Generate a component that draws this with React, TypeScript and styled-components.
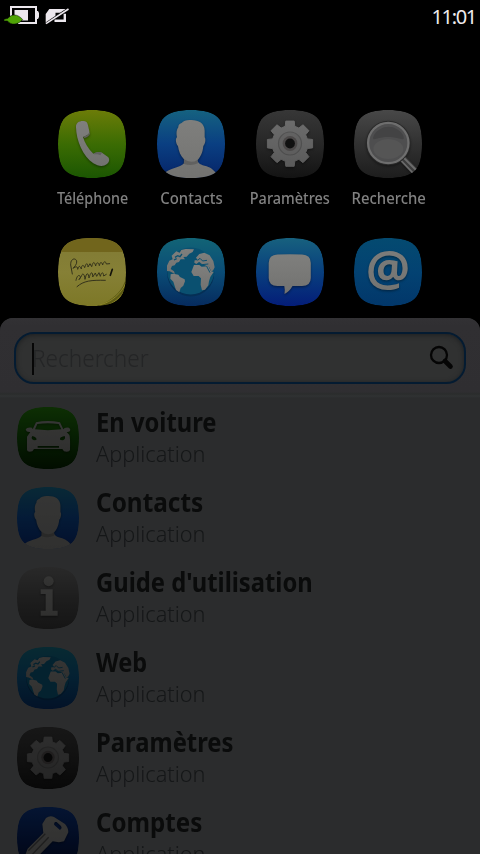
import React, { useId } from 'react';
import styled, { createGlobalStyle } from 'styled-components';

const GlobalStyle = createGlobalStyle`
  html, body { margin: 0; background: #000; }
  * { box-sizing: border-box; }
`;

const Screen = styled.main`
  width: 480px;
  height: 854px;
  overflow: hidden;
  background: #000;
  display: flex;
  flex-direction: column;
  font-family: 'Noto Sans', 'Open Sans', sans-serif;
`;

const StatusBar = styled.header`
  flex: none;
  height: 32px;
  display: flex;
  justify-content: space-between;
`;

const Clock = styled.time`
  color: #eeebed;
  font-size: 20px;
  line-height: 34px;
  letter-spacing: -1.3px;
  padding-right: 4px;
`;

const Launcher = styled.section`
  flex: none;
  height: 286px;
  padding: 78px 42px 0 43px;
  display: grid;
  grid-template-columns: repeat(4, 98.7px);
  grid-auto-rows: 128px;
  overflow: hidden;
`;

const LauncherItem = styled.div`
  display: flex;
  flex-direction: column;
  align-items: center;
`;

const LauncherLabel = styled.span<{ $stretch: number }>`
  margin-top: 8px;
  line-height: 24px;
  font-size: 15.5px;
  font-weight: 500;
  color: #818181;
  white-space: nowrap;
  transform: scaleX(${(p) => p.$stretch});
`;

const Panel = styled.section`
  flex: 1;
  min-height: 0;
  display: flex;
  flex-direction: column;
  overflow: hidden;
  background: #2b2c2d;
  border-radius: 13px 13px 0 0;
`;

const SearchHeader = styled.div`
  flex: none;
  height: 80px;
  padding: 14px;
  background: linear-gradient(#323134 0, #302f32 8px, #2f2e31 74px, #2a2c2c 76px, #303233 78px, #2b2c2d 80px);
`;

const SearchField = styled.div`
  height: 52px;
  padding: 0 9px 0 16px;
  border: 2px solid #041b31;
  border-radius: 20px;
  background: #303131;
  box-shadow: inset 0 1px 5px #1d1f20;
  display: flex;
  align-items: center;
`;

const Caret = styled.span`
  width: 2px;
  height: 32px;
  background: #060606;
  margin-top: 1px;
`;

const Placeholder = styled.span<{ $stretch: number }>`
  flex: 1;
  margin-left: -2px;
  font-size: 24px;
  font-weight: 300;
  line-height: 32px;
  color: #242526;
  transform: scaleX(${(p) => p.$stretch});
  transform-origin: left;
`;

const ResultList = styled.ul`
  list-style: none;
  margin: 0;
  padding: 0;
`;

const ResultRow = styled.li`
  height: 80px;
  padding: 9px 0 0 17px;
  display: flex;
  gap: 17px;
`;

const ResultText = styled.div`
  display: flex;
  flex-direction: column;
  align-items: flex-start;
  margin-top: -1px;
`;

const ResultTitle = styled.span<{ $stretch: number }>`
  font-size: 26px;
  font-weight: 700;
  line-height: 32px;
  color: #0a0b0b;
  white-space: nowrap;
  transform: scaleX(${(p) => p.$stretch});
  transform-origin: left;
`;

const ResultKind = styled.span`
  font-size: 21.5px;
  font-weight: 300;
  line-height: 32px;
  color: #151718;
  transform: scaleX(1.01);
  transform-origin: left;
`;

const IconSvg = styled.svg<{ $dim?: boolean }>`
  display: block;
  flex: none;
  filter: ${(p) => (p.$dim ? 'brightness(0.42)' : 'none')};
`;

const SQUIRCLE = 'M34 0C60 0 68 8 68 34S60 68 34 68 0 60 0 34 8 0 34 0Z';

type Kind = 'phone' | 'contact' | 'gear' | 'search' | 'note' | 'globe' | 'message' | 'mail' | 'car' | 'info' | 'key';

const TILE: Record<Kind, [string, string, string]> = {
  phone: ['#6c7c08', '#3b6c03', '#1b5602'],
  contact: ['#156280', '#0a3f82', '#062468'],
  gear: ['#373737', '#272727', '#131313'],
  search: ['#484848', '#313131', '#1d1d1d'],
  note: ['#807a34', '#868036', '#7d7827'],
  globe: ['#126476', '#0a4c76', '#062b5e'],
  message: ['#17617e', '#083f7e', '#041d78'],
  mail: ['#044a70', '#034272', '#02376a'],
  car: ['#1f6f09', '#0e4604', '#031e00'],
  info: ['#626262', '#464646', '#323232'],
  key: ['#0a3178', '#051c52', '#020c2a'],
};

function gearPath(cx: number, cy: number) {
  const pts: string[] = [];
  for (let i = 0; i < 8; i++) {
    const a = (i * 45 * Math.PI) / 180;
    for (const [d, r] of [[-15.5, 18], [-10.5, 23], [10.5, 23], [15.5, 18]]) {
      const t = a + (d * Math.PI) / 180;
      pts.push(`${(cx + r * Math.cos(t)).toFixed(2)} ${(cy + r * Math.sin(t)).toFixed(2)}`);
    }
  }
  return `M${pts.join('L')}Z`;
}

function Glyph({ kind, fill }: { kind: Kind; fill: string }) {
  switch (kind) {
    case 'phone':
      return (
        <g transform="translate(-8 -10) scale(.3333)">
          <path fill={fill} d="M78 82C77 68 88 62 102 63C110 64 112 68 114 76L118 94C119 104 108 108 99 111C104 128 114 146 130 161C138 157 148 156 156 158L174 171C180 177 178 187 171 192C160 201 145 199 130 190C98 168 79 122 78 82Z" />
          <path fill="#60605f" d="M101 110C108 108 119 104 118 94L120 101C118 108 110 112 103 114ZM132 160C142 156 152 157 156 158L151 166C145 162 138 162 132 163Z" />
        </g>
      );
    case 'contact':
      return (
        <g transform="translate(-107 -10) scale(.3333)">
          <path fill={fill} d="M385 82C384 76 390 70 395 69C400 61 412 59 424 60C446 60 464 70 464 92L464 112C468 116 466 132 460 138C458 160 450 172 443 180C443 190 452 195 470 199C484 204 491 210 500 222L490 245H350L342 222C358 203 391 204 402 190L402 178C392 168 386 154 384 138C378 132 375 116 381 112C378 100 380 88 385 82Z" />
          <path fill="#444" opacity=".4" d="M402 177Q423 193 443 179L444 190Q423 200 400 191Z" />
        </g>
      );
    case 'gear':
      return (
        <>
          <path fill={fill} stroke={fill} strokeWidth="1" strokeLinejoin="round" d={gearPath(34, 33.7)} />
          <circle cx="34" cy="33.5" r="11.5" fill="#5d5c5c" opacity=".4" stroke="#333" strokeWidth="1.2" />
          <circle cx="34" cy="33.5" r="7.4" fill="#4b4848" />
          <circle cx="34" cy="33.5" r="4.9" fill="#101010" />
        </>
      );
    case 'search':
      return (
        <>
          <path d="M48.5 48.5L61 61.5" stroke="#3c3c3c" strokeWidth="7" />
          <path d="M50 48L62.5 60.5M47.5 51L59 63" stroke="#6b6b6b" strokeWidth="1.8" />
          <circle cx="34.3" cy="33" r="20" fill="#4d4d4e" stroke="#2a2a2a" strokeWidth="4.4" />
          <circle cx="34.3" cy="33" r="20.2" fill="#4e4e4f" stroke="#6e6e6e" strokeWidth="2.3" />
          <path fill="#434344" d="M20 25A17 17 0 0 1 49 25C52 33 46 27 34 27S17 33 20 25Z" />
          <ellipse cx="34.3" cy="39" rx="15" ry="10" fill="#5b5b5c" opacity=".5" />
        </>
      );
    case 'note':
      return (
        <g transform="translate(-8 -8) scale(.3333)">
          <path fill="#71651c" d="M0 0H240V66H0Z" />
          <path fill="#5c5a14" d="M228 142C221 180 190 212 140 229L240 240Z" />
          <path fill="none" stroke="#8e8729" strokeWidth="3" d="M228 158C215 190 185 216 149 225M228 174C214 203 190 221 164 229" />
          <g fill="none" stroke="#34321b" strokeWidth="3" strokeLinecap="round" strokeLinejoin="round">
            <path d="M67 132L62 105C61 86 76 82 80 93C82 102 73 111 69 115C78 109 83 108 83 118C86 105 91 108 94 117C94 104 101 103 104 113C109 96 113 99 114 111L120 101L125 110C130 91 134 97 137 108C139 96 146 95 148 107C151 94 155 95 158 105C160 94 167 92 169 102L179 101" />
            <path d="M78 151C81 133 91 133 91 143L87 149L94 139C98 126 104 133 105 148C109 127 115 126 117 144C124 121 128 126 128 141L136 129L140 139L147 128L151 139C155 124 160 126 161 138L169 133M81 170C101 152 124 150 166 151" />
            <path stroke="#15140b" strokeWidth="5" d="M187 118L181 136" />
          </g>
        </g>
      );
    case 'globe':
      return (
        <>
          <circle cx="33.7" cy="35" r="23.5" fill="#052f55" />
          <circle cx="33.7" cy="33" r="23.5" fill="#0a5070" />
          <g transform="translate(-107 -8) scale(.3333)" fill={fill}>
            <path d="M351 107L358 92L368 88L365 77L379 64L389 68L394 60L407 57L432 58L428 66L418 71L410 80L400 81L405 88L392 88L387 96L379 98L374 106L366 108L362 117L372 124L375 132L359 124L351 123Z" />
            <path d="M362 133L370 131L385 134L390 141L404 148L405 154L400 167L392 174L388 187L378 180L374 168L370 155L361 146Z" />
            <path d="M432 105L448 105L455 110L475 109L483 124L491 126L481 141L477 154L475 166L465 179L456 181L452 164L453 145L446 138L431 138L424 126Z" />
            <path d="M433 98L434 91L444 91L438 83L448 72L463 68L479 76L490 93L494 112L490 120L484 125L478 112L465 106L452 102L447 96L439 102Z" />
            <path d="M443 91L450 85L458 93L471 91M448 97L456 104L475 102M470 109L480 128" fill="none" stroke="#0a5070" strokeWidth="3" />
            <path d="M375 82L383 77L390 80L396 72M372 90L380 86" fill="none" stroke="#0a5070" strokeWidth="4" />
          </g>
        </>
      );
    case 'message':
      return <path fill={fill} d="M21.5 16.6Q34 16 46 16.6Q54.8 17 54.8 25V40Q54.8 47.8 46 48.1H36.5Q33.5 53.5 28.5 56Q29.2 52 28.3 48.1H21.5Q12.7 47.8 12.7 40V25Q12.7 17 21.5 16.6Z" />;
    case 'mail':
      return <text x="34" y="48" textAnchor="middle" fontFamily="Noto Sans, sans-serif" fontWeight="700" fontSize="49" fill={fill}>@</text>;
    case 'car':
      return (
        <g transform="scale(.3656) translate(-51 -36)" fill={fill}>
          <path fillRule="evenodd" d="M98 103L108 82Q143 74 180 82L190 103Q193 96 207 98Q213 102 210 108Q206 112 200 111L208 120Q211 125 210 165Q208 172 192 169L187 162H102L97 169Q82 172 81 165V125L91 111Q80 113 77 104Q80 96 96 98ZM105 103Q143 108 184 103L176 87Q143 83 112 87ZM97 123Q91 132 102 136L109 135Q112 127 97 123ZM194 123Q176 126 181 135L189 136Q198 131 194 123ZM113 153V158H177V153Z" />
        </g>
      );
    case 'info':
      return (
        <g transform="scale(.3656) translate(-51 -36)" fill={fill}>
          <circle cx="146" cy="79" r="15" />
          <path d="M122 103H158V167H173V182H122V167H137V117H122Z" />
        </g>
      );
    case 'key':
      return (
        <g transform="scale(.3656) translate(-51 -276)">
          <path fill={fill} fillRule="evenodd" d="M138 309Q150 300 162 306L195 327Q205 338 205 352L192 379Q178 384 158 379L104 434L72 430L83 401L130 354L127 327ZM165 321Q161 325 163 330L180 345L185 339L183 333L170 321Z" />
          <path d="M136 356L85 407M146 367L96 419" stroke="#484848" strokeWidth="4" />
        </g>
      );
  }
}

function AppIcon({ kind, size, dim }: { kind: Kind; size: number; dim?: boolean }) {
  const id = useId().replace(/[^a-zA-Z0-9]/g, '');
  const [top, middle, bottom] = TILE[kind];
  const dark = kind === 'gear';
  return (
    <IconSvg width={size} height={size} viewBox="0 0 68 68" $dim={dim}>
      <defs>
        <linearGradient id={`${id}t`} x2="0" y2="1">
          <stop stopColor={top} />
          <stop offset=".5" stopColor={middle} />
          <stop offset="1" stopColor={bottom} />
        </linearGradient>
        <linearGradient id={`${id}g`} x2="0" y2="1">
          <stop stopColor={dark ? '#6c6c6c' : '#7f7f7d'} />
          <stop offset="1" stopColor={dark ? '#5a5a5a' : '#727270'} />
        </linearGradient>
        <clipPath id={`${id}c`}><path d={SQUIRCLE} /></clipPath>
        <filter id={`${id}s`} x="-20%" y="-20%" width="140%" height="150%" colorInterpolationFilters="sRGB">
          <feDropShadow dx="0" dy="1.2" stdDeviation="1" floodColor="#000" floodOpacity=".4" />
        </filter>
      </defs>
      <g clipPath={`url(#${id}c)`}>
        <path d={SQUIRCLE} fill={`url(#${id}t)`} />
        <g filter={kind === 'note' || kind === 'globe' ? undefined : `url(#${id}s)`}>
          <Glyph kind={kind} fill={`url(#${id}g)`} />
        </g>
      </g>
    </IconSvg>
  );
}

function StatusIcons() {
  return (
    <IconSvg width="72" height="28" viewBox="0 0 72 28" aria-hidden="true">
      <path d="M11 16V7H36V23H18" fill="none" stroke="#ece7ed" strokeWidth="2" />
      <path d="M37 11H38L39 13V17L38 19H37Z" fill="#ece7ed" />
      <path d="M14.5 10H28V20.5H22L14.5 15Z" fill="#ece7ed" />
      <path d="M4 19.3L8 18.3C11 14 17 13.3 22.7 19.5C18 25.3 11 25.5 7.5 20.9L4 21Z" fill="#4fa306" stroke="#050705" strokeWidth=".5" />
      <path d="M49.3 9H66.5L45.7 23.5V14Z" fill="#ece7ed" />
      <path d="M55.5 12.8H60.5L55.5 16.3Z" fill="#050505" />
      <path d="M46 24L68.8 8.8" stroke="#000" strokeWidth="3.2" />
      <path d="M46 23.6L68.5 9" stroke="#ece7ed" strokeWidth="1.6" />
      <path d="M64.8 13.8V20.8H54.5" fill="none" stroke="#ece7ed" strokeWidth="2.4" />
    </IconSvg>
  );
}

const APPS: { kind: Kind; label?: string; stretch?: number }[] = [
  { kind: 'phone', label: 'Téléphone', stretch: 0.925 },
  { kind: 'contact', label: 'Contacts', stretch: 0.96 },
  { kind: 'gear', label: 'Paramètres', stretch: 0.935 },
  { kind: 'search', label: 'Recherche', stretch: 0.96 },
  { kind: 'note' },
  { kind: 'globe' },
  { kind: 'message' },
  { kind: 'mail' },
];

const RESULTS: { kind: Kind; title: string; stretch: number }[] = [
  { kind: 'car', title: 'En voiture', stretch: 0.914 },
  { kind: 'contact', title: 'Contacts', stretch: 0.937 },
  { kind: 'info', title: "Guide d'utilisation", stretch: 0.914 },
  { kind: 'globe', title: 'Web', stretch: 0.905 },
  { kind: 'gear', title: 'Paramètres', stretch: 0.915 },
  { kind: 'key', title: 'Comptes', stretch: 0.928 },
];

export default function App() {
  return (
    <Screen>
      <GlobalStyle />
      <StatusBar>
        <StatusIcons />
        <Clock>11:01</Clock>
      </StatusBar>
      <Launcher>
        {APPS.map((app) => (
          <LauncherItem key={app.kind}>
            <AppIcon kind={app.kind} size={68} />
            {app.label && <LauncherLabel $stretch={app.stretch ?? 1}>{app.label}</LauncherLabel>}
          </LauncherItem>
        ))}
      </Launcher>
      <Panel>
        <SearchHeader>
          <SearchField>
            <Caret />
            <Placeholder $stretch={0.94}>Rechercher</Placeholder>
            <IconSvg width="26" height="26" viewBox="0 0 26 26">
              <circle cx="10" cy="10" r="8" fill="none" stroke="#050505" strokeWidth="2.3" />
              <path d="M16 16L21.5 21.5" stroke="#050505" strokeWidth="4.6" strokeLinecap="round" />
            </IconSvg>
          </SearchField>
        </SearchHeader>
        <ResultList>
          {RESULTS.map((result) => (
            <ResultRow key={result.title}>
              <AppIcon kind={result.kind} size={62} dim />
              <ResultText>
                <ResultTitle $stretch={result.stretch}>{result.title}</ResultTitle>
                <ResultKind>Application</ResultKind>
              </ResultText>
            </ResultRow>
          ))}
        </ResultList>
      </Panel>
    </Screen>
  );
}
